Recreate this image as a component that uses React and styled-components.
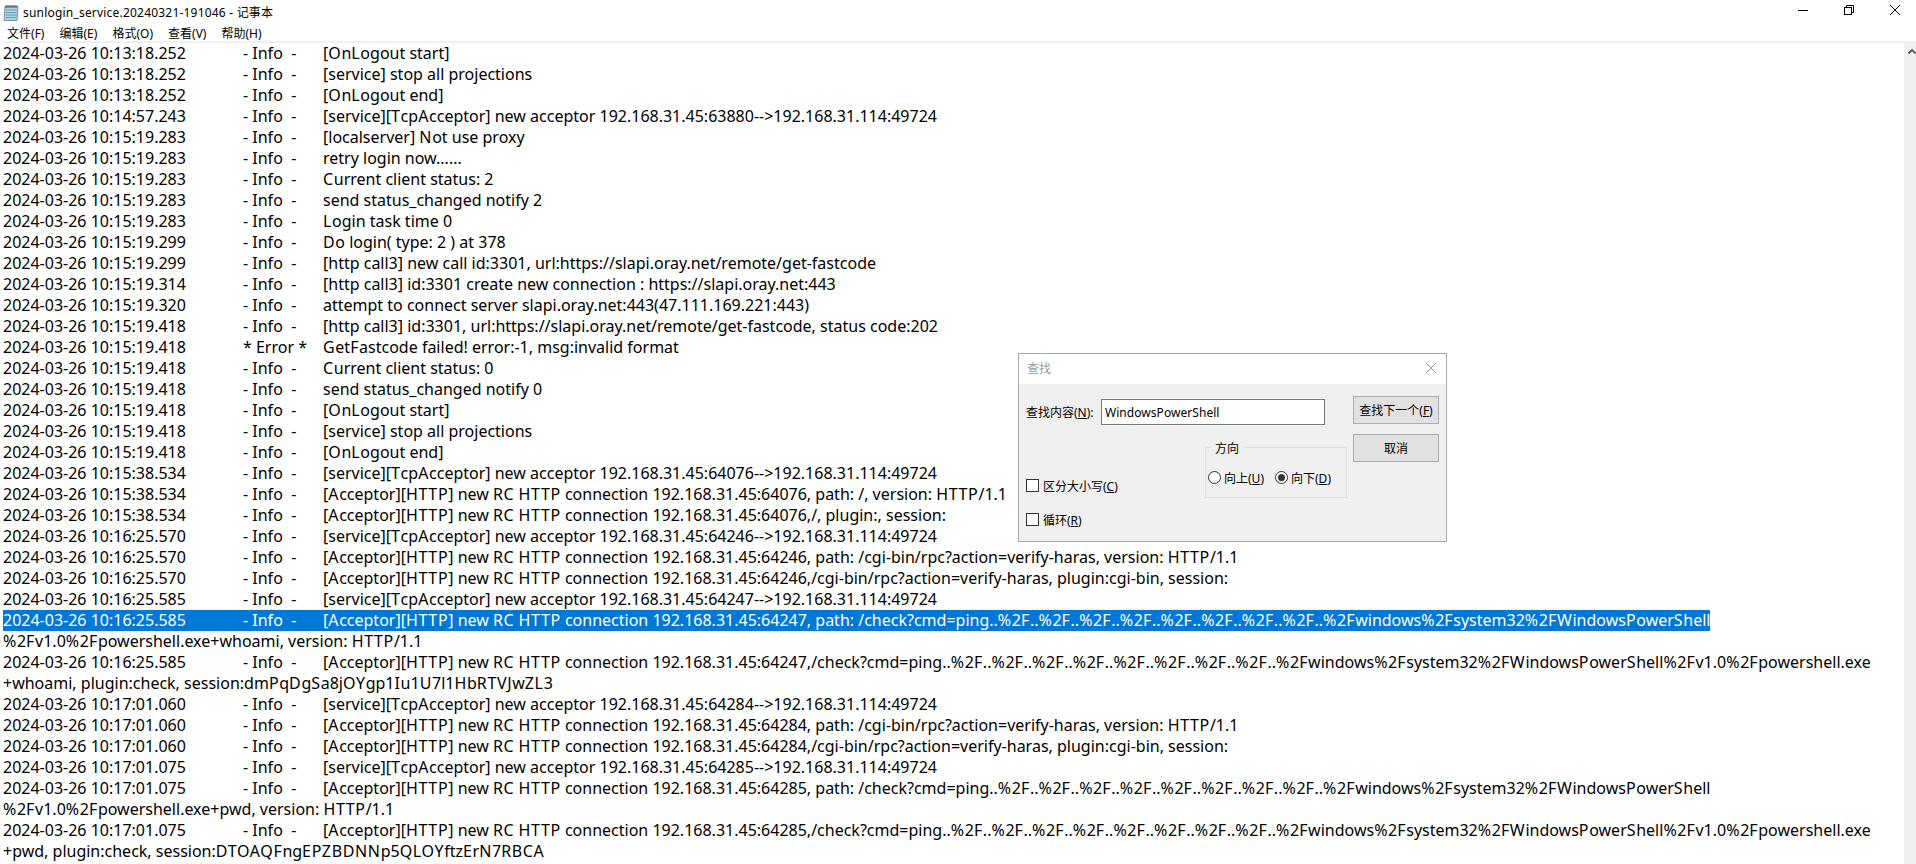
import React from 'react';
import styled, { createGlobalStyle } from 'styled-components';

const GlobalStyle = createGlobalStyle`
  html, body {
    margin: 0;
    padding: 0;
    height: 100%;
    background: #fff;
    overflow: hidden;
  }
`;

const uiFont = `"Noto Sans", "Noto Sans CJK SC", sans-serif`;

const Window = styled.div`
  position: relative;
  width: 1916px;
  height: 864px;
  display: flex;
  flex-direction: column;
  overflow: hidden;
  background: #fff;
  font-family: ${uiFont};
  color: #000;
`;

const TitleBar = styled.div`
  height: 24px;
  margin-right: -2px;
  display: flex;
  align-items: center;
  font-size: 12px;
  flex: none;
`;

const AppIcon = styled.svg`
  width: 17px;
  height: 17px;
  margin: 0 4px 0 2px;
  flex: none;
`;

const TitleText = styled.span`
  flex: 1;
  white-space: nowrap;
  letter-spacing: 0.2px;
`;

const WinButton = styled.div`
  width: 46px;
  height: 20px;
  align-self: flex-start;
  display: flex;
  align-items: center;
  justify-content: center;
`;

const MenuBar = styled.div`
  height: 17px;
  display: flex;
  align-items: center;
  gap: 15px;
  padding-left: 7px;
  font-size: 12px;
  flex: none;
`;

const Body = styled.div`
  flex: 1;
  display: flex;
  margin-left: 3px;
  border-top: 2px solid #f0f0f0;
  min-height: 0;
`;

const Editor = styled.div`
  flex: 1;
  overflow: hidden;
  font-size: 16px;
  line-height: 21px;
  white-space: pre;
`;

const Line = styled.div`
  height: 21px;
`;

const LineText = styled.span`
  display: inline-block;
  height: 21px;
  background: ${p => (p.$selected ? '#0078d7' : 'transparent')};
  color: ${p => (p.$selected ? '#fff' : '#000')};
`;

const Stamp = styled.span`
  display: inline-block;
  width: 240px;
`;

const Level = styled.span`
  display: inline-block;
  width: 80px;
`;

// capitals and percent signs run wider in the original face
const Wide = styled.span`
  letter-spacing: 0.65px;
`;

const Scrollbar = styled.div`
  width: 12px;
  flex: none;
  background: #f0f0f0;
  display: flex;
  flex-direction: column;
  align-items: center;
  padding: 6px 0 0 3px;
  box-sizing: border-box;
`;

const Dialog = styled.div`
  position: absolute;
  left: 1018px;
  top: 353px;
  width: 429px;
  height: 189px;
  box-sizing: border-box;
  border: 1px solid #a8a8a8;
  background: #f0f0f0;
  font-size: 12px;
  display: flex;
  flex-direction: column;
`;

const DialogTitle = styled.div`
  height: 30px;
  flex: none;
  box-sizing: border-box;
  background: #fff;
  display: flex;
  align-items: center;
  justify-content: space-between;
  padding: 0 10px 2px 8px;
  color: #999;
`;

const DialogBody = styled.div`
  flex: 1;
  display: flex;
  padding: 12px 7px 0 7px;
  gap: 6px;
`;

const DialogMain = styled.div`
  flex: 1;
  display: flex;
  flex-direction: column;
`;

const FindRow = styled.div`
  display: flex;
  align-items: center;
  margin-top: 3px;
`;

const FindLabel = styled.span`
  width: 75px;
  flex: none;
`;

const FindInput = styled.div`
  width: 224px;
  height: 26px;
  box-sizing: border-box;
  border: 1px solid #7a7a7a;
  background: #fff;
  display: flex;
  align-items: center;
  padding-left: 3px;
  font-size: 12px;
  letter-spacing: 0.05px;
`;

const OptionsRow = styled.div`
  display: flex;
  justify-content: space-between;
  align-items: flex-start;
  margin-top: 22px;
`;

const Checks = styled.div`
  display: flex;
  flex-direction: column;
  gap: 17px;
  margin-top: 30px;
`;

const CheckRow = styled.div`
  display: flex;
  align-items: center;
  gap: 4px;
  height: 17px;
`;

const CheckBox = styled.div`
  width: 13px;
  height: 13px;
  box-sizing: border-box;
  border: 1px solid #333;
  background: #fff;
`;

const Group = styled.div`
  position: relative;
  width: 142px;
  height: 51px;
  box-sizing: border-box;
  border: 1px solid #dcdcdc;
  display: flex;
  align-items: center;
  gap: 11px;
  padding: 10px 0 0 2px;
`;

const GroupLabel = styled.span`
  position: absolute;
  top: -9px;
  left: 5px;
  padding: 0 4px;
  background: #f0f0f0;
`;

const RadioRow = styled.div`
  display: flex;
  align-items: center;
  gap: 3px;
`;

const Radio = styled.div`
  width: 13px;
  height: 13px;
  box-sizing: border-box;
  border: 1px solid #333;
  border-radius: 50%;
  background: #fff;
  display: flex;
  align-items: center;
  justify-content: center;
  &::after {
    content: '';
    display: ${p => (p.$checked ? 'block' : 'none')};
    width: 7px;
    height: 7px;
    border-radius: 50%;
    background: #333;
  }
`;

const DialogButtons = styled.div`
  width: 86px;
  flex: none;
  display: flex;
  flex-direction: column;
  gap: 10px;
`;

const DialogButton = styled.div`
  height: 28px;
  box-sizing: border-box;
  border: 1px solid #adadad;
  background: #e1e1e1;
  display: flex;
  align-items: center;
  justify-content: center;
`;

const Key = styled.u`
  text-decoration: underline;
`;

const logLines = [
  ['2024-03-26 10:13:18.252', '- Info  -', '[OnLogout start]'],
  ['2024-03-26 10:13:18.252', '- Info  -', '[service] stop all projections'],
  ['2024-03-26 10:13:18.252', '- Info  -', '[OnLogout end]'],
  ['2024-03-26 10:14:57.243', '- Info  -', '[service][TcpAcceptor] new acceptor 192.168.31.45:63880-->192.168.31.114:49724'],
  ['2024-03-26 10:15:19.283', '- Info  -', '[localserver] Not use proxy'],
  ['2024-03-26 10:15:19.283', '- Info  -', 'retry login now......'],
  ['2024-03-26 10:15:19.283', '- Info  -', 'Current client status: 2'],
  ['2024-03-26 10:15:19.283', '- Info  -', 'send status_changed notify 2'],
  ['2024-03-26 10:15:19.283', '- Info  -', 'Login task time 0'],
  ['2024-03-26 10:15:19.299', '- Info  -', 'Do login( type: 2 ) at 378'],
  ['2024-03-26 10:15:19.299', '- Info  -', '[http call3] new call id:3301, url:https://slapi.oray.net/remote/get-fastcode'],
  ['2024-03-26 10:15:19.314', '- Info  -', '[http call3] id:3301 create new connection : https://slapi.oray.net:443'],
  ['2024-03-26 10:15:19.320', '- Info  -', 'attempt to connect server slapi.oray.net:443(47.111.169.221:443)'],
  ['2024-03-26 10:15:19.418', '- Info  -', '[http call3] id:3301, url:https://slapi.oray.net/remote/get-fastcode, status code:202'],
  ['2024-03-26 10:15:19.418', '* Error *', 'GetFastcode failed! error:-1, msg:invalid format'],
  ['2024-03-26 10:15:19.418', '- Info  -', 'Current client status: 0'],
  ['2024-03-26 10:15:19.418', '- Info  -', 'send status_changed notify 0'],
  ['2024-03-26 10:15:19.418', '- Info  -', '[OnLogout start]'],
  ['2024-03-26 10:15:19.418', '- Info  -', '[service] stop all projections'],
  ['2024-03-26 10:15:19.418', '- Info  -', '[OnLogout end]'],
  ['2024-03-26 10:15:38.534', '- Info  -', '[service][TcpAcceptor] new acceptor 192.168.31.45:64076-->192.168.31.114:49724'],
  ['2024-03-26 10:15:38.534', '- Info  -', '[Acceptor][HTTP] new RC HTTP connection 192.168.31.45:64076, path: /, version: HTTP/1.1'],
  ['2024-03-26 10:15:38.534', '- Info  -', '[Acceptor][HTTP] new RC HTTP connection 192.168.31.45:64076,/, plugin:, session:'],
  ['2024-03-26 10:16:25.570', '- Info  -', '[service][TcpAcceptor] new acceptor 192.168.31.45:64246-->192.168.31.114:49724'],
  ['2024-03-26 10:16:25.570', '- Info  -', '[Acceptor][HTTP] new RC HTTP connection 192.168.31.45:64246, path: /cgi-bin/rpc?action=verify-haras, version: HTTP/1.1'],
  ['2024-03-26 10:16:25.570', '- Info  -', '[Acceptor][HTTP] new RC HTTP connection 192.168.31.45:64246,/cgi-bin/rpc?action=verify-haras, plugin:cgi-bin, session:'],
  ['2024-03-26 10:16:25.585', '- Info  -', '[service][TcpAcceptor] new acceptor 192.168.31.45:64247-->192.168.31.114:49724'],
  ['2024-03-26 10:16:25.585', '- Info  -', '[Acceptor][HTTP] new RC HTTP connection 192.168.31.45:64247, path: /check?cmd=ping..%2F..%2F..%2F..%2F..%2F..%2F..%2F..%2F..%2Fwindows%2Fsystem32%2FWindowsPowerShell', '%2Fv1.0%2Fpowershell.exe+whoami, version: HTTP/1.1', true],
  ['2024-03-26 10:16:25.585', '- Info  -', '[Acceptor][HTTP] new RC HTTP connection 192.168.31.45:64247,/check?cmd=ping..%2F..%2F..%2F..%2F..%2F..%2F..%2F..%2F..%2Fwindows%2Fsystem32%2FWindowsPowerShell%2Fv1.0%2Fpowershell.exe', '+whoami, plugin:check, session:dmPqDgSa8jOYgp1Iu1U7l1HbRTVJwZL3'],
  ['2024-03-26 10:17:01.060', '- Info  -', '[service][TcpAcceptor] new acceptor 192.168.31.45:64284-->192.168.31.114:49724'],
  ['2024-03-26 10:17:01.060', '- Info  -', '[Acceptor][HTTP] new RC HTTP connection 192.168.31.45:64284, path: /cgi-bin/rpc?action=verify-haras, version: HTTP/1.1'],
  ['2024-03-26 10:17:01.060', '- Info  -', '[Acceptor][HTTP] new RC HTTP connection 192.168.31.45:64284,/cgi-bin/rpc?action=verify-haras, plugin:cgi-bin, session:'],
  ['2024-03-26 10:17:01.075', '- Info  -', '[service][TcpAcceptor] new acceptor 192.168.31.45:64285-->192.168.31.114:49724'],
  ['2024-03-26 10:17:01.075', '- Info  -', '[Acceptor][HTTP] new RC HTTP connection 192.168.31.45:64285, path: /check?cmd=ping..%2F..%2F..%2F..%2F..%2F..%2F..%2F..%2F..%2Fwindows%2Fsystem32%2FWindowsPowerShell', '%2Fv1.0%2Fpowershell.exe+pwd, version: HTTP/1.1'],
  ['2024-03-26 10:17:01.075', '- Info  -', '[Acceptor][HTTP] new RC HTTP connection 192.168.31.45:64285,/check?cmd=ping..%2F..%2F..%2F..%2F..%2F..%2F..%2F..%2F..%2Fwindows%2Fsystem32%2FWindowsPowerShell%2Fv1.0%2Fpowershell.exe', '+pwd, plugin:check, session:DTOAQFngEPZBDNNp5QLOYftzErN7RBCA'],
];

const menus = [['文件', 'F'], ['编辑', 'E'], ['格式', 'O'], ['查看', 'V'], ['帮助', 'H']];

function spaced(text) {
  return text.split(/([A-Z%]+)/).map((part, i) => (i % 2 ? <Wide key={i}>{part}</Wide> : part));
}

function LogLine({ stamp, level, message, rest, selected }) {
  return (
    <>
      <Line>
        <LineText $selected={selected}>
          <Stamp>{stamp}</Stamp>
          <Level>{level}</Level>
          {spaced(message)}
        </LineText>
      </Line>
      {rest && <Line>{spaced(rest)}</Line>}
    </>
  );
}

export default function App() {
  return (
    <Window>
      <GlobalStyle />
      <TitleBar>
        <AppIcon viewBox="0 0 17 17">
          <path d="M3 2.5h13l-1 14H2z" fill="#a9d4e6" stroke="#6f93a6" />
          <path d="M4 6h10.5M3.8 8.5h10.5M3.6 11h10.5M3.4 13.5h10.5" stroke="#6f9db3" />
          <path d="M4 1v3M6 1v3M8 1v3M10 1v3M12 1v3M14 1v3" stroke="#555" />
        </AppIcon>
        <TitleText>sunlogin_service.20240321-191046 - 记事本</TitleText>
        <WinButton>
          <svg width="10" height="10" viewBox="0 0 10 10"><path d="M0 5.5h10" stroke="#000" /></svg>
        </WinButton>
        <WinButton>
          <svg width="10" height="10" viewBox="0 0 10 10" fill="none" stroke="#000"><path d="M2.5 2.5V.5h7v7h-2" /><rect x=".5" y="2.5" width="7" height="7" /></svg>
        </WinButton>
        <WinButton>
          <svg width="10" height="10" viewBox="0 0 10 10"><path d="M0 0l10 10M10 0L0 10" stroke="#000" /></svg>
        </WinButton>
      </TitleBar>
      <MenuBar>
        {menus.map(([name, key]) => <span key={key}>{name}({key})</span>)}
      </MenuBar>
      <Body>
        <Editor>
          {logLines.map((l, i) => (
            <LogLine key={i} stamp={l[0]} level={l[1]} message={l[2]} rest={l[3]} selected={l[4]} />
          ))}
        </Editor>
        <Scrollbar>
          <svg width="8" height="5" viewBox="0 0 8 5"><path d="M.5 4.5L4 1l3.5 3.5" fill="none" stroke="#606060" strokeWidth="2" /></svg>
        </Scrollbar>
      </Body>
      <Dialog>
        <DialogTitle>
          <span>查找</span>
          <svg width="10" height="10" viewBox="0 0 10 10"><path d="M0 0l10 10M10 0L0 10" stroke="#999" /></svg>
        </DialogTitle>
        <DialogBody>
          <DialogMain>
            <FindRow>
              <FindLabel>查找内容(<Key>N</Key>):</FindLabel>
              <FindInput>WindowsPowerShell</FindInput>
            </FindRow>
            <OptionsRow>
              <Checks>
                <CheckRow><CheckBox /><span>区分大小写(<Key>C</Key>)</span></CheckRow>
                <CheckRow><CheckBox /><span>循环(<Key>R</Key>)</span></CheckRow>
              </Checks>
              <Group>
                <GroupLabel>方向</GroupLabel>
                <RadioRow><Radio /><span>向上(<Key>U</Key>)</span></RadioRow>
                <RadioRow><Radio $checked /><span>向下(<Key>D</Key>)</span></RadioRow>
              </Group>
            </OptionsRow>
          </DialogMain>
          <DialogButtons>
            <DialogButton><span>查找下一个(<Key>F</Key>)</span></DialogButton>
            <DialogButton>取消</DialogButton>
          </DialogButtons>
        </DialogBody>
      </Dialog>
    </Window>
  );
}
